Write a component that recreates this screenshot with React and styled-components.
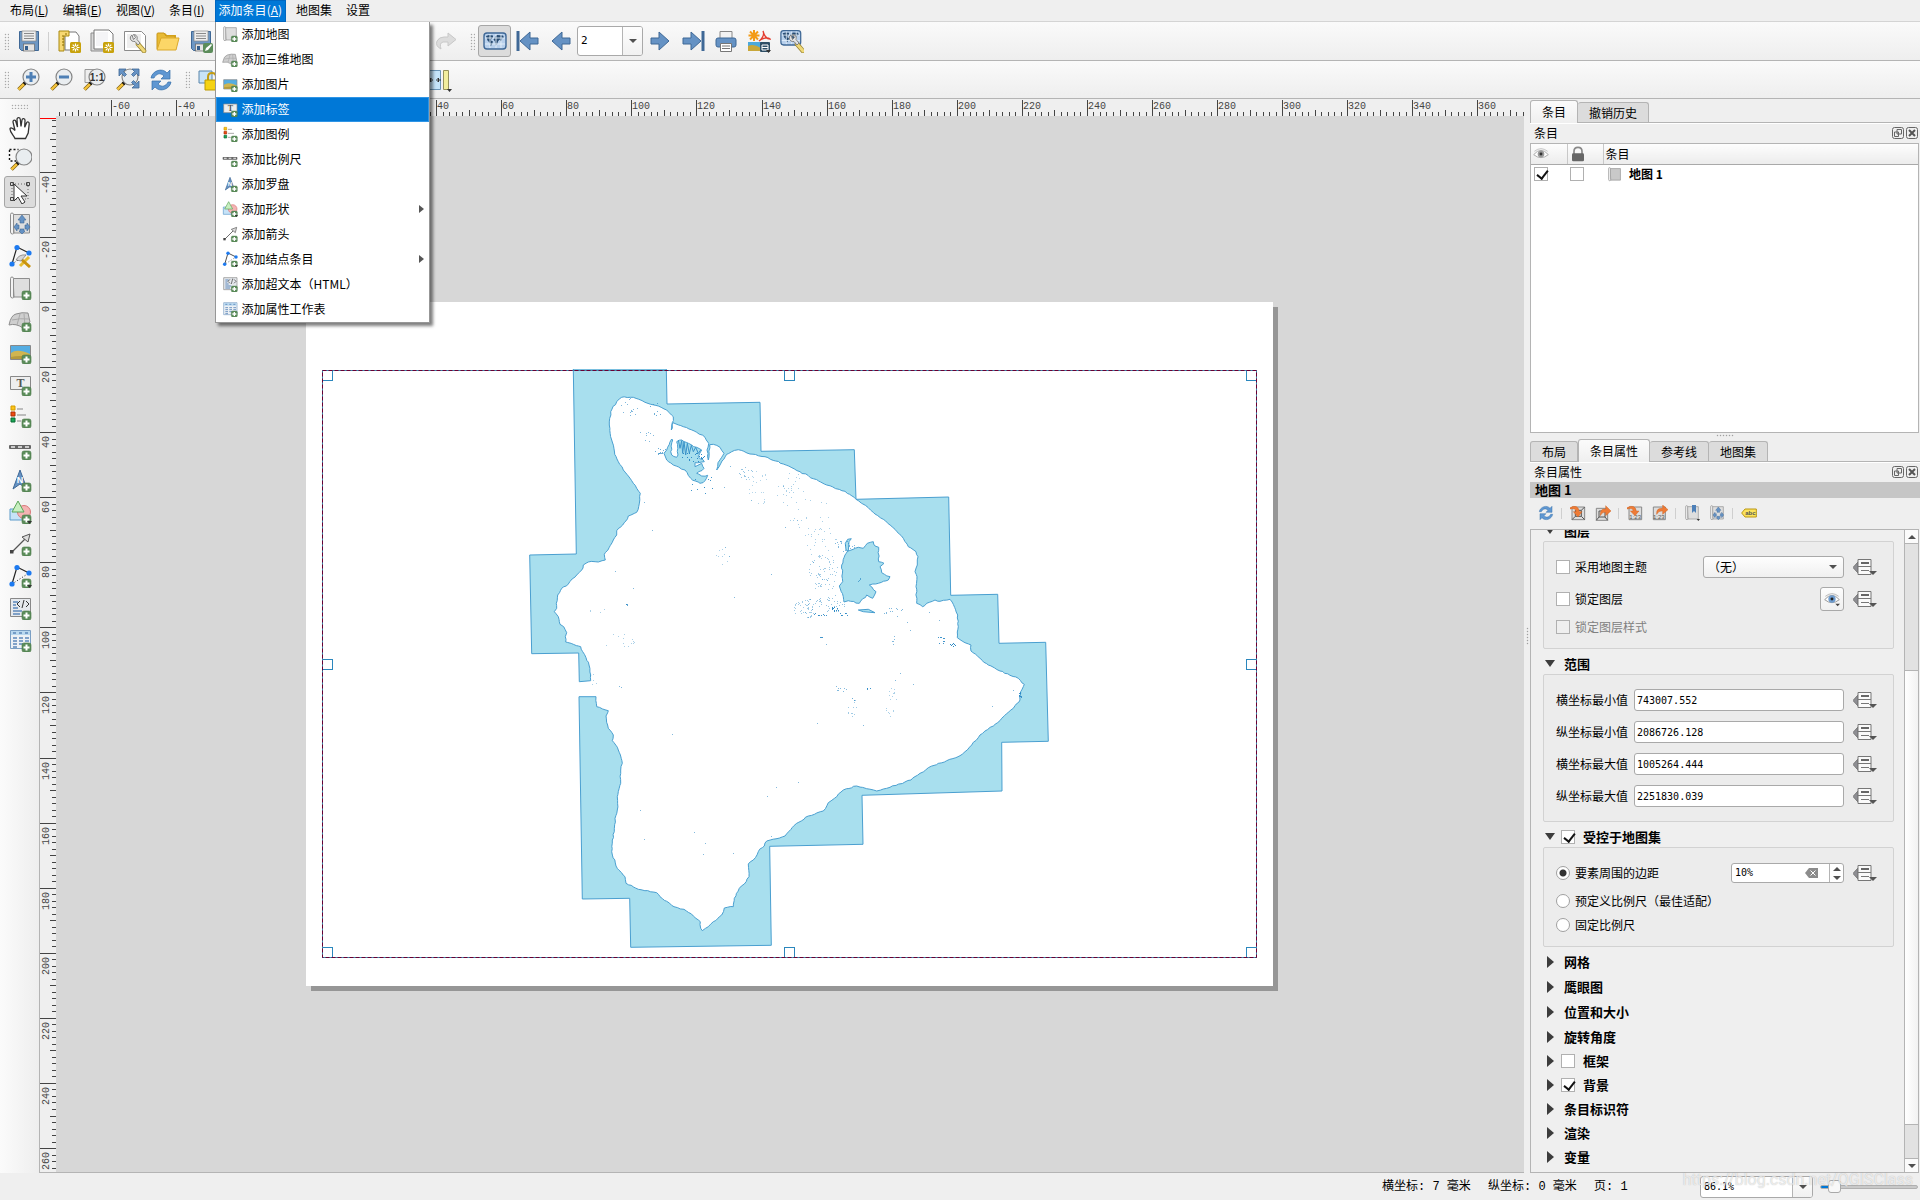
import { useState } from "react";
import styled, { createGlobalStyle, css } from "styled-components";

const GlobalStyle = createGlobalStyle`
    * {
        box-sizing: border-box;
    }
    html, body {
        margin: 0;
        overflow: hidden;
    }
    body, button, input, select, table {
        font-family: "Noto Sans CJK SC", sans-serif;
        font-size: 12px;
        line-height: 16px;
        color: #000;
    }
    button {
        border: none;
        background: none;
        padding: 0;
    }
    svg {
        display: block;
        flex: none;
    }
`;

const mono = `"DejaVu Sans Mono", "Noto Sans CJK SC", monospace`;

/* ---------- layout ---------- */

const Window = styled.div`
    display: flex;
    flex-direction: column;
    height: 100vh;
    background: #efefef;
`;
const MenuBar = styled.nav`
    display: flex;
    height: 22px;
    padding-left: 3px;
    border-bottom: 1px solid #d4d4d4;
`;
const MenuItem = styled.div`
    position: relative;
    display: flex;
`;
const MenuButton = styled.button`
    height: 22px;
    padding: 0 7px 2px;
    white-space: nowrap;
    ${(p) => p.$open && css`
        padding: 0 4px 2px;
        margin: 0 3px;
        color: white;
        background: #0078d7;
        box-shadow: inset 0 0 0 1px #0067c0;
    `}
`;
const Dropdown = styled.ul`
    position: absolute;
    z-index: 10;
    top: 22px;
    left: 3px;
    width: 215px;
    margin: 0;
    padding: 0;
    list-style: none;
    background: white;
    border: 1px solid #979797;
    border-top: none;
    box-shadow: 3px 3px 3px rgba(0, 0, 0, 0.5);
`;
const DropdownItem = styled.button`
    display: flex;
    align-items: center;
    gap: 4px;
    width: 100%;
    height: 25px;
    padding: 0 5px 1px 6px;
    text-align: left;
    white-space: nowrap;
    ${(p) => p.$active && css`
        color: white;
        background: #0078d7;
        box-shadow: inset 0 0 0 1px #2f95e6;
    `}
`;
const SubArrow = styled.span`
    margin-left: auto;
    border: 4px solid transparent;
    border-left: 5px solid #555;
    border-right: none;
`;
const ToolBar = styled.div`
    display: flex;
    align-items: center;
    height: ${(p) => p.$height}px;
    border-bottom: 1px solid #b4b4b4;
    background: linear-gradient(#fafafa, #eeeeee);
`;
const Grip = styled.span`
    flex: none;
    width: 5px;
    height: 17px;
    margin: 0 3px 0 ${(p) => p.$left || 4}px;
    background: radial-gradient(circle, #a8a8a8 30%, transparent 50%) 0 0 / 3px 3px;
`;
const ToolButton = styled.button`
    display: flex;
    align-items: center;
    justify-content: center;
    width: 33px;
    height: 32px;
    flex: none;
    border-radius: 3px;
    ${(p) => p.$pressed && css`
        background: #dcdcdc;
        border: 1px solid #a6a6a6;
    `}
`;
const Separator = styled.span`
    width: 1px;
    height: ${(p) => p.$height || 19}px;
    margin: 0 3px;
    background: #cfcfcf;
`;
const Spacer = styled.span`
    width: ${(p) => p.$width}px;
`;
const PageSelect = styled.div`
    display: flex;
    width: 66px;
    height: 30px;
    background: white;
    border: 1px solid #a9a9a9;
    border-radius: 3px;
    overflow: hidden;
`;
const PageInput = styled.input`
    flex: 1;
    min-width: 0;
    padding: 0 3px;
    border: none;
    outline: none;
    background: transparent;
    font-family: ${mono};
    font-size: ${(p) => p.$size || 11}px;
`;
const ComboButton = styled.button`
    display: flex;
    align-items: center;
    justify-content: center;
    width: 20px;
    border-left: 1px solid #b4b4b4;
    background: linear-gradient(#fdfdfd, #f1f1f1);
`;
const DownArrow = styled.span`
    border: 4px solid transparent;
    border-top: 4px solid #505050;
    border-bottom: none;
`;
const UpArrow = styled(DownArrow)`
    border-top: none;
    border-bottom: 4px solid #505050;
`;
const Main = styled.main`
    display: flex;
    flex: 1;
    min-height: 0;
`;
const SideTools = styled.aside`
    display: flex;
    flex-direction: column;
    align-items: center;
    width: 40px;
    flex: none;
    border-right: 1px solid #b4b4b4;
    background: linear-gradient(90deg, #fbfbfb, #eeeeee);
`;
const SideGrip = styled.span`
    width: 17px;
    height: 5px;
    margin: 5px 0 3px;
    background: radial-gradient(circle, #a8a8a8 30%, transparent 50%) 0 0 / 3px 3px;
`;
const SideButton = styled(ToolButton)`
    width: 32px;
`;
const Workspace = styled.section`
    display: grid;
    flex: 1;
    min-width: 0;
    grid-template: 17px minmax(0, 1fr) / 16px minmax(0, 1fr);
    border-bottom: 1px solid #b4b4b4;
`;
const Canvas = styled.div`
    position: relative;
    overflow: hidden;
    background: #d7d7d7;
`;
const Paper = styled.div`
    position: absolute;
    left: 250px;
    top: 186px;
    width: 967px;
    height: 684px;
    padding: 67px 16px 0 15px;
    background: white;
    box-shadow: 5px 5px 0 #969696;
`;
const Splitter = styled.div`
    display: flex;
    align-items: center;
    justify-content: center;
    width: 6px;
    flex: none;
    &::after {
        content: "";
        width: 3px;
        height: 18px;
        background: radial-gradient(circle, #a0a0a0 30%, transparent 50%) 0 0 / 3px 3px;
    }
`;
const Docks = styled.aside`
    display: flex;
    flex-direction: column;
    width: 390px;
    flex: none;
`;
const Dock = styled.section`
    display: flex;
    flex-direction: column;
    min-height: 0;
    flex: ${(p) => (p.$height ? `0 0 ${p.$height}px` : 1)};
`;
const Tabs = styled.div`
    display: flex;
    align-items: flex-end;
    height: 24px;
    border-bottom: 1px solid #b4b4b4;
    box-shadow: 0 1px 0 #fff;
`;
const Tab = styled.button`
    height: ${(p) => (p.$active ? 23 : 20)}px;
    padding: 0 11px;
    border: 1px solid #b4b4b4;
    border-left-width: ${(p) => (p.$active ? 1 : 0)}px;
    border-bottom: none;
    border-radius: 3px 3px 0 0;
    background: ${(p) => (p.$active ? "linear-gradient(#fbfbfb, #efefef)" : "#dcdcdc")};
    margin-bottom: ${(p) => (p.$active ? -1 : 0)}px;
    &:first-child {
        border-left-width: 1px;
    }
`;
const DockTitle = styled.div`
    display: flex;
    align-items: center;
    gap: 2px;
    height: 20px;
    padding: 0 2px 0 4px;
    flex: none;
    span {
        flex: 1;
    }
`;
const ItemsFrame = styled.div`
    flex: 1;
    margin-right: 1px;
    background: white;
    border: 1px solid #b4b4b4;
`;
const ItemsTable = styled.table`
    width: 100%;
    table-layout: fixed;
    border-collapse: collapse;
    th {
        height: 20px;
        padding: 0 2px;
        text-align: left;
        font-weight: 400;
        border-bottom: 1px solid #a9a9a9;
        background: linear-gradient(#fdfdfd, #ececec);
    }
    th + th {
        border-left: 1px solid #c8c8c8;
    }
    th:not(:last-child) {
        width: 36px;
    }
    td {
        height: 20px;
        padding: 0 3px;
    }
    td:last-child {
        padding-left: 4px;
    }
`;
const ItemName = styled.span`
    display: flex;
    align-items: center;
    gap: 7px;
    font-weight: 700;
`;
const HSplit = styled.div`
    height: 5px;
    flex: none;
    display: flex;
    justify-content: center;
    align-items: center;
    &::after {
        content: "";
        width: 18px;
        height: 3px;
        background: radial-gradient(circle, #a0a0a0 30%, transparent 50%) 0 0 / 3px 3px;
    }
`;
const ItemTitle = styled.h2`
    flex: none;
    height: 16px;
    margin: 0;
    padding-left: 5px;
    font-size: 13px;
    line-height: 16px;
    background: #c6c6c6;
`;
const ItemTools = styled.div`
    display: flex;
    align-items: center;
    height: 31px;
    padding: 0 0 1px 3px;
    flex: none;
`;
const ToolGroup = styled.div`
    display: flex;
    align-items: center;
`;
const SmallButton = styled.button`
    display: flex;
    align-items: center;
    justify-content: center;
    width: ${(p) => p.$width || 25}px;
    height: 24px;
    ${(p) => p.$framed && css`
        border: 1px solid #a9a9a9;
        border-radius: 3px;
        background: linear-gradient(#fdfdfd, #f0f0f0);
    `}
`;
const ScrollFrame = styled.div`
    display: flex;
    flex: 1;
    min-height: 0;
    margin-right: 1px;
    border: 1px solid #b4b4b4;
    border-right: none;
`;
const ScrollBody = styled.div`
    flex: 1;
    overflow: hidden;
`;
const ScrollBar = styled.div`
    display: flex;
    flex-direction: column;
    width: 15px;
    border: 1px solid #b4b4b4;
    border-width: 0 1px;
    background: #e2e2e2;
`;
const ScrollStep = styled.button`
    display: flex;
    align-items: center;
    justify-content: center;
    height: 14px;
    background: #fbfbfb;
    border: 0 solid #b4b4b4;
    border-width: ${(p) => (p.$end ? "1px 0 0" : "0 0 1px")};
`;
const ScrollTrack = styled.div`
    flex: ${(p) => p.$share};
`;
const ScrollThumb = styled(ScrollTrack)`
    border: solid #b4b4b4;
    border-width: 1px 0;
    background: linear-gradient(90deg, #fff, #f2f2f2);
`;
const SectionHead = styled.div`
    display: flex;
    align-items: center;
    height: ${(p) => p.$height || 25}px;
    padding: ${(p) => (p.$open ? 4 : 0)}px 0 0 13px;
    font-size: 13px;
    font-weight: 700;
    label {
        margin-left: 8px;
        font-size: 13px;
    }
    input {
        margin-left: 5px;
    }
`;
const Toggle = styled.button`
    width: 12px;
    height: 12px;
    display: flex;
    align-items: center;
    justify-content: center;
    &::before {
        content: "";
        border: solid transparent;
        ${(p) => p.$open
            ? "border-width: 7px 5px 0; border-top-color: #3c3c3c;"
            : "border-width: 6px 0 6px 7px; border-left-color: #3c3c3c;"}
    }
`;
const Group = styled.div`
    margin: 0 10px 0 12px;
    padding: 9px 16px 9px 12px;
    border: 1px solid #d2d2d2;
    border-radius: 2px;
    background: #ececec;
`;
const FirstSection = styled.div`
    margin-top: -14px;
`;
const Collapsed = styled.div`
    margin-top: 2px;
`;
const Row = styled.div`
    display: flex;
    align-items: center;
    gap: 9px;
    height: ${(p) => p.$height || 32}px;
`;
const Choice = styled.label`
    display: flex;
    align-items: center;
    gap: 5px;
    flex: 1;
    color: ${(p) => (p.$disabled ? "#808080" : "#000")};
`;
const FieldLabel = styled.label`
    width: 69px;
    white-space: nowrap;
`;
const Field = styled.input`
    flex: 1;
    min-width: 0;
    height: 22px;
    padding: 0 2px;
    border: 1px solid #a9a9a9;
    border-radius: 3px;
    background: white;
    font-family: ${mono};
    font-size: 10px;
`;
const Check = styled.input.attrs({ type: "checkbox" })`
    appearance: none;
    display: block;
    flex: none;
    width: 14px;
    height: 14px;
    margin: 0;
    border: 1px solid #b0b0b0;
    background: white;
    &:checked::after {
        content: "";
        display: block;
        width: 5px;
        height: 9px;
        margin: 0 0 0 4px;
        border: solid #111;
        border-width: 0 2px 2px 0;
        transform: rotate(38deg);
    }
    &:disabled {
        background: #efefef;
    }
`;
const Radio = styled.input.attrs({ type: "radio" })`
    appearance: none;
    flex: none;
    width: 14px;
    height: 14px;
    margin: 0;
    border: 1px solid #a0a0a0;
    border-radius: 50%;
    background: white;
    &:checked {
        background: radial-gradient(circle, #333 0 3px, white 4px);
    }
`;
const SelectBox = styled.div`
    position: relative;
    width: 141px;
    select {
        appearance: none;
        width: 100%;
        height: 22px;
        padding: 0 4px;
        border: 1px solid #a9a9a9;
        border-radius: 3px;
        background: linear-gradient(#fefefe, #f0f0f0);
    }
    span {
        position: absolute;
        right: 7px;
        top: 9px;
        pointer-events: none;
    }
`;
const SpinBox = styled.div`
    display: flex;
    align-items: center;
    width: 113px;
    height: 20px;
    border: 1px solid #a9a9a9;
    border-radius: 3px;
    background: white;
    svg {
        margin-right: 11px;
    }
`;
const SpinSteps = styled.div`
    display: flex;
    flex-direction: column;
    align-self: stretch;
    width: 14px;
    border-left: 1px solid #b4b4b4;
    button {
        flex: 1;
        display: flex;
        align-items: center;
        justify-content: center;
    }
`;
const StatusBar = styled.footer`
    position: relative;
    display: flex;
    align-items: center;
    justify-content: flex-end;
    height: 27px;
    padding-right: 2px;
`;
const StatusText = styled.span`
    width: 106px;
    white-space: pre;
    font-family: "Liberation Mono", "Noto Sans CJK SC", monospace;
`;
const ZoomBox = styled(PageSelect)`
    width: 113px;
    height: 22px;
`;
const ZoomSlider = styled.input.attrs({ type: "range" })`
    appearance: none;
    width: 98px;
    height: 14px;
    margin: 0 0 0 7px;
    background: transparent;
    &::-webkit-slider-runnable-track {
        height: 4px;
        border: 1px solid #b0b0b0;
        border-radius: 2px;
        background: linear-gradient(90deg, #0078d7 12%, #c9c9c9 12%);
    }
    &::-webkit-slider-thumb {
        appearance: none;
        width: 13px;
        height: 13px;
        margin-top: -6px;
        border: 1px solid #a9a9a9;
        border-radius: 3px;
        background: #f8f8f8;
    }
`;
const Watermark = styled.span`
    position: absolute;
    right: 7px;
    top: -3px;
    font-family: Roboto, sans-serif;
    font-size: 16px;
    line-height: 20px;
    color: rgba(255, 255, 255, 0.7);
    text-shadow: 0 0 1px rgba(120, 120, 120, 0.55);
    pointer-events: none;
`;

/* ---------- icons, all on a 24 grid ---------- */

const Icon = ({ size = 24, children }) => (
    <svg width={size} height={size} viewBox="0 0 24 24" fill="none" aria-hidden="true">{children}</svg>
);
const Plus = () => (
    <g>
        <rect x="14" y="15" width="9" height="9" rx="2" fill="#5b8c5a" stroke="#497a48" strokeWidth=".6" />
        <path d="M18.5 16.5v6M15.5 19.5h6" stroke="#fff" strokeWidth="2" />
    </g>
);
const Star = () => (
    <g>
        <rect x="13" y="13" width="11" height="11" rx="1.5" fill="#c8a20c" />
        <path d="M18.5 14.5v8M14.5 18.5h8M15.7 15.7l5.6 5.6M21.3 15.7l-5.6 5.6" stroke="#fff" strokeWidth="1.2" />
        <circle cx="18.5" cy="18.5" r="1.3" fill="#c8a20c" />
    </g>
);
const Wrench = ({ x = 0, y = 0 }) => (
    <g transform={`translate(${x} ${y})`}>
        <path d="M15 15l6 7" stroke="#9a8430" strokeWidth="4.6" strokeLinecap="round" />
        <path d="M15 15l6 7" stroke="#efd878" strokeWidth="3" strokeLinecap="round" />
        <path d="M9 6c-3 2-2 7 3 6.500l3 3.500 2-2-3-3.500c1-3-1-5-3.500-5l2 3-2 2z" fill="#e3e3e3" stroke="#777" strokeWidth=".9" />
    </g>
);
const Lens = ({ children, dx = -1 }) => (
    <g transform={`translate(${dx} 0)`}>
        <path d="M9 15l-6.500 6.500" stroke="#7a5c10" strokeWidth="3.600" />
        <path d="M8 16l-5.500 5.500" stroke="#f5c33b" strokeWidth="2.400" />
        <path d="M10 14l-2 2" stroke="#111" strokeWidth="3.400" />
        <circle cx="15" cy="9" r="8" fill="#e9edf0" stroke="#858585" strokeWidth="1.200" />
        {children}
    </g>
);
const Sheet = ({ fill = "#dedede" }) => (
    <g stroke="#8e8e8e">
        <path d="M5 2.500h16.500v18.500H6z" fill={fill} />
        <path d="M2.500 2.500q0-1.500 1.500-1.500t1.500 1.500v17.500q1 2-1 2t-2-2z" fill="#f3f3f3" />
    </g>
);
const Floppy = () => (
    <g>
        <path d="M2.500 2.500h19v19h-17l-2-2z" fill="#6d97c4" stroke="#3f6896" />
        <rect x="5" y="2" width="14" height="10" fill="#eee" stroke="#888" strokeWidth=".7" />
        <path d="M7 4.500h10M7 7h10M7 9.500h10" stroke="#8a8a8a" />
        <rect x="6.500" y="15" width="11" height="7" fill="#e4e4e4" stroke="#666" strokeWidth=".7" />
        <rect x="8" y="17" width="3" height="4" fill="#365f8d" />
    </g>
);
const Globe = () => (
    <g>
        <rect x="1" y="4" width="22" height="16" rx="3" fill="#b8d0ec" stroke="#3f6896" strokeWidth="1.400" />
        <path d="M3 7l3-1 4 .5 0 2-2 2 0 1 2 1-1 3-1.500 2-1-4-2-2zM12 8l2-2 6 .5 1 2-2 1-1 3-1.500-2-1.500 2-1 3-1.500 1-.5-4-1.500-2z" fill="#294d73" />
        <path d="M2 9h20M2 15h20M7 5v14M13 5v14M18 5v14" stroke="#e5f0fb" strokeWidth=".9" />
    </g>
);
const Nodes = () => (
    <g>
        <path d="M4 20L9 3l12 6" stroke="#222" strokeWidth="1.200" />
        <path d="M4 20L21 9" stroke="#222" strokeDasharray="1 2" />
        <circle cx="9" cy="3.500" r="2.600" fill="#1d7af0" />
        <circle cx="21" cy="9" r="2.600" fill="#1d7af0" />
        <circle cx="4" cy="20" r="2.600" fill="#1d7af0" />
    </g>
);
const Caret = () => <path d="M19 21h5l-2.500 3z" fill="#333" />;

const ARROW_RIGHT = "M4 9h8V3l10 9-10 9v-6H4z";
const blue = { fill: "#6592c4", stroke: "#3f6896" };

const drawings = {
    save: <Floppy />,
    newLayout: <><path d="M8 3h11l3 4v14H8z" fill="#fff" stroke="#777" /><path d="M2 2h10v5H7v15H2z" fill="#f7d873" stroke="#a98910" /><path d="M5 7h2M5 10h2M5 13h2M5 16h2M9 4v2" stroke="#8a6c00" /><Star /></>,
    duplicate: <><path d="M1 4h17v18H1z" fill="#d8d8d8" stroke="#8b8b8b" /><path d="M4 1h15l4 4v15H4z" fill="#fff" stroke="#777" /><path d="M6 3h12v14H6z" fill="#f4f4f6" /><Star /></>,
    manager: <><path d="M1.500 2.500h17l4 4v15h-21z" fill="#fff" stroke="#8b8b8b" /><path d="M4 5h14v14H4z" fill="#eee" /><Wrench /></>,
    folder: <><path d="M2 4h7l2 2h9v3H2z" fill="#d9a91c" /><path d="M1 20V5q0-1 1-1h6l2 3h9v3" fill="#e8bb35" stroke="#c9971a" /><path d="M5 9h18l-3 12H1z" fill="#fcd667" stroke="#dba92c" /></>,
    saveAs: <><Floppy /><rect x="14" y="14" width="10" height="10" rx="2" fill="#5b8c5a" /><path d="M16 22l1-3 5-4 1 1-4 5z" fill="#fff" /></>,
    redo: <path d="M14 4l8 6.500-8 6.500v-4H9q-4 1-2 7-6-3-4-8 2-4 7-4h4z" fill="#dcdcdc" stroke="#c8c8c8" />,
    atlas: <Globe />,
    first: <><path d="M2 2v20" stroke="#3f6896" strokeWidth="3" /><path d={ARROW_RIGHT} transform="translate(26 0) scale(-1 1)" {...blue} /></>,
    prev: <path d={ARROW_RIGHT} transform="translate(25 0) scale(-1 1)" {...blue} />,
    next: <path d={ARROW_RIGHT} transform="translate(-1 0)" {...blue} />,
    last: <><path d="M22 2v20" stroke="#3f6896" strokeWidth="3" /><path d={ARROW_RIGHT} transform="translate(-2 0)" {...blue} /></>,
    print: <><path d="M6 2.500h12v7H6z" fill="#f3f3f3" stroke="#888" /><rect x="2" y="9" width="20" height="9" rx="2" {...blue} /><path d="M6.500 14.500h11v8h-11z" fill="#fff" stroke="#777" /><path d="M8 17h8M8 19.500h8" stroke="#777" /></>,
    exportAtlas: <><path d="M7 1v11M1.500 6.500h11M3 2.500l8 8M11 2.500l-8 8" stroke="#f39b17" strokeWidth="2" /><path d="M16 2c2 4-2 9-4 10 3-3 9-4 11-2-4 0-6-4-7-8" stroke="#e33b2e" strokeWidth="1.300" /><path d="M1 13h13v9H1z" fill="#4ba9dd" /><path d="M1 17q5-3 13 2v3H1z" fill="#c8a73a" /><rect x="13" y="13" width="10" height="10" rx="1" fill="#2f4f66" /><path d="M15 16h6v5h-6zM15 18.500h6" stroke="#fff" /><Caret /></>,
    atlasSettings: <><g transform="translate(0 -2) scale(.9)"><Globe /></g><Wrench x={2} /></>,
    zoomIn: <Lens><path d="M15 4v10M10 9h10" stroke="#4d7fb5" strokeWidth="3" /></Lens>,
    zoomOut: <Lens><path d="M10 9h10" stroke="#4d7fb5" strokeWidth="3" /></Lens>,
    zoomActual: <><path d="M2 1.500h10v13H2z" stroke="#999" fill="#eee" /><Lens><text x="15" y="13" textAnchor="middle" fontSize="10" fontWeight="700" fontFamily="Liberation Sans, sans-serif" fill="#333">1:1</text></Lens></>,
    zoomFull: <><Lens /><path d="M3 1h7l-2.500 2.500 3 3-2 2-3-3L3 8zM23 1h-7l2.500 2.500-3 3 2 2 3-3L23 8zM23 20h-7l2.500-2.500-3-3 2-2 3 3L23 13z" {...blue} strokeWidth=".8" /></>,
    refresh: <><path d="M2 10C3 3 13-1 18 5l3-3v9h-9l3-3C11 4 7 6 5 10z" fill="#5f97d2" stroke="#3670a9" strokeWidth=".7" /><path d="M22 14c-1 7-11 11-16 5l-3 3v-9h9l-3 3c4 4 8 2 10-2z" fill="#5f97d2" stroke="#3670a9" strokeWidth=".7" /></>,
    lockItems: <><path d="M1 3h13v12H1z" fill="#c8e3f7" stroke="#5b86ab" /><path d="M10 13V9q0-4 4-4t4 4v4" stroke="#c39c13" strokeWidth="2" /><path d="M7 12h14v10H7z" fill="#f5d313" stroke="#bd9a00" /></>,
    resize: <><path d="M1.500 2.500h11v19h-11z" fill="#c5e4fa" stroke="#6b95b7" /><path d="M0 12h3M4.500 12l-2-2v4zM13 12h-3M8.500 12l2-2v4z" stroke="#333" /><path d="M15.500 2.500h5v19h-5z" fill="#f2ee9d" stroke="#96925b" /><Caret /></>,
    pan: <path d="M7 22.500c-1-3-5-6-5-9.500 0-2 3-1 5 1.500L5 6c0-2.500 2.500-2.500 3 0l1.500 5L9 3.500c0-2.500 3-2.500 3.300 0l.7 7 1-6.500c.3-2 3-1.700 3 .3l-.3 7L18.500 7c.8-2 3-1 2.700 1l-1 9-2.700 5.500z" fill="#fff" stroke="#333" strokeWidth="1.300" />,
    zoomArea: <><path d="M1.500 2v11h10M1.500 1.500h9" stroke="#111" strokeWidth="1.400" strokeDasharray="2 2" /><Lens dx={1} /></>,
    select: <><path d="M4 4h16v15H4z" stroke="#666" strokeDasharray="1 2" /><path d="M2.500 2.500h3v3h-3zM18.500 2.500h3v3h-3zM2.500 17.500h3v3h-3z" stroke="#444" /><path d="M6 4v17l4-4 4 7 3-2-4-6h6z" fill="#fff" stroke="#333" /></>,
    moveContent: <><Sheet /><path d="M14 3l4 5h-2v3h-4V8h-2zM14 22l-3-3h1v-2h4v2h1zM6 15l3-4v2h2v4H9v2zM22 15l-3-4v2h-2v4h2v2z" {...blue} strokeWidth=".6" /></>,
    editNodes: <><Nodes /><path d="M12 22l9-9" stroke="#e5bd32" strokeWidth="3" /><path d="M13 15l9 8" stroke="#c9920d" strokeWidth="3" /><path d="M8 16q3-6 10-5l-5 6z" fill="#d5d5d5" stroke="#777" strokeWidth=".7" /></>,
    addMap: <><Sheet /><Plus /></>,
    add3d: <><path d="M1 17q2-10 7-11 6-2 12-1l2 9-7 6q-7-5-14-3z" fill="#cfcfcf" stroke="#8e8e8e" /><path d="M4 12q8-2 17-1M12 6l-3 11M16 6l1 12" stroke="#aaa" /><Plus /></>,
    addPicture: <><path d="M2.500 5.500h20v14h-20z" fill="#55ade2" stroke="#888" /><path d="M3 13q6-5 19 1v5H3z" fill="#d0b550" /><path d="M3 17q8-2 19 0v2H3z" fill="#b59a3c" /><Plus /></>,
    addLabel: <><path d="M2.500 4.500h20v13h-20z" fill="#eee" stroke="#888" /><text x="12.500" y="15" textAnchor="middle" fontSize="12" fontWeight="700" fontFamily="Liberation Serif, serif" fill="#555">T</text><Plus /></>,
    addLegend: <><path d="M3 2h4v4H3z" fill="#fcc419" stroke="#d39b00" /><path d="M3 8h4v4H3z" fill="#f04a12" stroke="#a93309" /><path d="M3 14h4v4H3z" fill="#19a657" stroke="#0a6a33" /><path d="M9 5h6M9 11h9M9 17h4" stroke="#aaa" strokeWidth="1.500" /><Plus /></>,
    addScale: <><rect x="1" y="9" width="22" height="4" rx="1" fill="#666" /><path d="M3 11h4M10 11h4M17 11h4" stroke="#eee" strokeWidth="1.600" /><Plus /></>,
    addNorth: <><path d="M12 2l7 19-7-5-7 5z" {...blue} /><text x="12" y="15" textAnchor="middle" fontSize="9" fontWeight="700" fontFamily="Liberation Sans, sans-serif" fill="#fff">N</text><Plus /></>,
    addShape: <><path d="M2 9h13v11H2z" fill="#c7e3f8" stroke="#5d9ccb" /><circle cx="16" cy="12" r="6.500" fill="#f4b3b3" stroke="#d87878" /><path d="M10 1l6 11H4z" fill="#c8efc0" stroke="#5aa558" /><Plus /><Caret /></>,
    addArrow: <><path d="M4 20L18 6" stroke="#555" strokeWidth="1.300" /><path d="M22 2l-2 8-6-5z" fill="#ddd" stroke="#555" /><path d="M2 18h3.500v3.500H2z" fill="#444" /><Plus /></>,
    addNodes: <><Nodes /><Plus /><Caret /></>,
    addHtml: <><path d="M2.500 2.500h20v18h-20z" fill="#e6e9ed" stroke="#888" /><path d="M5 6h5M5 9h3M5 12h5M5 15h9M5 18h7" stroke="#5d88ba" strokeWidth="1.500" /><path d="M12 5l-3 3 3 3M18 5l3 3-3 3M16 4l-2 8" stroke="#333" /><Plus /></>,
    addTable: <><path d="M2.500 2.500h20v18h-20z" fill="#edf1f5" stroke="#7a9fc4" /><path d="M3 3h19v4H3z" fill="#b9d8ef" /><path d="M5 5h3M11 5h3M17 5h3M5 10h4M11 10h4M17 10h4M5 13h4M11 13h4M17 13h4M5 16h4M11 16h4M5 19h4" stroke="#5d88ba" strokeWidth="1.300" /><Plus /></>,
    setExtent: <><path d="M3 3h19v19H3z" fill="#ddd" stroke="#888" strokeWidth="1.500" /><path d="M8 8h9v9H8zM3 22l5-5M22 22l-5-5M22 3l-5 5" stroke="#555" strokeWidth="1.500" /><path d="M0 4q12-6 14 6h4l-6 8-7-8h4q0-6-9-4z" fill="#ee7b36" stroke="#c95a17" strokeWidth=".6" /></>,
    viewExtent: <><path d="M2 5h17v18H2z" fill="#ddd" stroke="#888" strokeWidth="1.500" /><path d="M6 9h9v9H6zM2 23l4-5M19 23l-4-5" stroke="#555" strokeWidth="1.500" /><path d="M8 16Q7 5 16 6V1l8 8-8 7v-5q-5-1-8 5z" fill="#ee7b36" stroke="#c95a17" strokeWidth=".6" /></>,
    setScale: <><path d="M3 3h19v19H3z" fill="#ddd" stroke="#888" strokeWidth="1.500" /><text x="21" y="21" textAnchor="end" fontSize="9" fontFamily="Liberation Sans, sans-serif" fill="#555">1:23</text><path d="M0 4q12-6 14 5h4l-6 7-7-7h4q0-5-9-3z" fill="#ee7b36" stroke="#c95a17" strokeWidth=".6" /></>,
    viewScale: <><path d="M2 3h18v19H2z" fill="#ddd" stroke="#888" strokeWidth="1.500" /><text x="19" y="21" textAnchor="end" fontSize="9" fontFamily="Liberation Sans, sans-serif" fill="#555">1:23</text><path d="M7 14Q6 4 16 5V0l8 7-8 7v-5q-6-1-9 5z" fill="#ee7b36" stroke="#c95a17" strokeWidth=".6" /></>,
    bookmark: <><Sheet /><path d="M12 0h6v12l-3-3-3 3z" fill="#4d80b8" /><Caret /></>,
    labels: <><path d="M1 12l5-6h17v12H6z" fill="#fbe35c" stroke="#bb9713" strokeWidth="1.500" /><text x="14" y="15.500" textAnchor="middle" fontSize="9" fontWeight="700" fontFamily="Liberation Sans, sans-serif" fill="#555">abc</text></>,
    mapItem: <Sheet fill="#c9c9c9" />,
    eye: <><path d="M1 13q11-13 22 0-11 9-22 0z" fill="#fff" stroke="#999" strokeWidth="1.500" /><circle cx="12" cy="12" r="5.500" fill="#6e9ccf" /><circle cx="12" cy="12" r="2.200" fill="#222" /><path d="M2 8q10-8 20 0" stroke="#999" /><path d="M17 19h7l-3.500 4z" fill="#444" /></>,
    eyeGray: <><path d="M1 13q11-13 22 0-11 9-22 0z" fill="#fff" stroke="#aaa" strokeWidth="1.500" /><circle cx="12" cy="12" r="5" fill="#999" /><circle cx="12" cy="12" r="2.200" fill="#333" /><path d="M2 8q10-8 20 0" stroke="#aaa" /></>,
    padlock: <><path d="M6 12V8q0-6 6-6t6 6v4" stroke="#888" strokeWidth="2.500" /><rect x="3" y="11" width="18" height="12" rx="2" fill="#666" /></>,
};

const Draw = ({ name, size }) => <Icon size={size}>{drawings[name]}</Icon>;

const OverrideIcon = () => (
    <svg width="24" height="18" viewBox="0 0 24 18" fill="none" aria-hidden="true">
        <path d="M5 4v11L0 9.500z" fill="#8e8e93" stroke="#777" />
        <path d="M5 1.500h13v15H5z" fill="#fafafa" stroke="#777" />
        <path d="M8 5h8" stroke="#666" strokeWidth="2" />
        <path d="M5 8.500h13M8 12.500h8" stroke="#777" />
        <path d="M16 13h8l-4 4z" fill="#555" />
    </svg>
);
const DockIcon = ({ close }) => (
    <svg width="12" height="12" viewBox="0 0 12 12" fill="none" aria-hidden="true">
        <rect x=".5" y=".5" width="11" height="11" rx="2" stroke="#666" />
        {close
            ? <path d="M3 3l6 6M9 3L3 9" stroke="#555" strokeWidth="2" />
            : <path d="M5 2.500h4.500V7H5zM2.500 5h4v4.500h-4z" stroke="#666" />}
    </svg>
);

/* ---------- rulers ---------- */

const PX_PER_MM = 3.254;
const ticksBetween = (from, to) => Array.from({ length: (to - from) / 2 + 1 }, (_, i) => from + i * 2);
const tickLength = (mm) => (mm % 20 === 0 ? 16 : mm % 10 === 0 ? 6 : 4);

const RulerSvg = styled.svg`
    width: 100%;
    height: 100%;
    overflow: hidden;
    background: #efefef;
    font-family: "Liberation Mono", monospace;
    font-size: 10px;
    fill: #444;
    shape-rendering: crispEdges;
`;

const HorizontalRuler = () => (
    <RulerSvg>
        {ticksBetween(-76, 374).map((mm) => {
            const x = Math.round(250 + mm * PX_PER_MM);
            return (
                <g key={mm}>
                    <rect x={x} y={17 - tickLength(mm)} width="1" height={tickLength(mm)} />
                    {mm % 20 === 0 && <text x={x + 1} y="10">{mm}</text>}
                </g>
            );
        })}
    </RulerSvg>
);
const VerticalRuler = () => (
    <RulerSvg>
        {ticksBetween(-56, 266).map((mm) => {
            const y = Math.round(186 + mm * PX_PER_MM);
            return (
                <g key={mm}>
                    <rect x={16 - tickLength(mm)} y={y} width={tickLength(mm)} height="1" />
                    {mm % 20 === 0 && (
                        <text transform={`translate(9 ${y + 4}) rotate(-90)`} textAnchor="end">{mm}</text>
                    )}
                </g>
            );
        })}
        <rect x="0" y="2" width="16" height="1" fill="#f00" />
    </RulerSvg>
);

/* ---------- map ---------- */

// survey sheets: each has its own origin, three sheet units per pixel
const sheets = { nw: [520, 360], ne: [780, 440], s: [560, 680] };

const place = (sheet, text) => {
    const [ox, oy] = sheets[sheet];
    return text.trim().split(/\s+/).map((pair) => {
        const [u, v] = pair.split(",").map(Number);
        return [ox + u / 3, oy + v / 3];
    });
};
const toPath = (points) => "M" + points.map(([x, y]) => `${x.toFixed(1)} ${y.toFixed(1)}`).join("L") + "Z";

let seed = 7;
const random = () => {
    seed = (seed * 16807) % 2147483647;
    return seed / 2147483647;
};
// splits long coast segments so the shore line looks ragged
const ragged = (points) => points.flatMap(([x, y], i) => {
    const next = points[i + 1];
    if (!next) return [[x, y]];
    const steps = Math.max(1, Math.round(Math.hypot(next[0] - x, next[1] - y) / 3));
    return Array.from({ length: steps }, (_, k) => {
        const t = k / steps;
        const jitter = k === 0 ? 0 : 1.2;
        return [
            x + (next[0] - x) * t + (random() - 0.5) * jitter,
            y + (next[1] - y) * t + (random() - 0.5) * jitter,
        ];
    });
});

const coast = [
    ...place("nw", `212,962 212,945 207,915 198,893 188,875 182,860 160,853 137,846 136,830 140,818 131,800 120,793
        115,770 103,755 110,745 109,730 113,705 125,685 145,672 170,645 185,630 190,615 205,606 235,606 256,600 253,583
        268,562 280,540 290,525 290,512 308,495 325,468 350,457 356,440 361,400 350,385 335,362 310,330 295,305 284,283
        275,240 268,195 272,155 290,125 305,112 340,112 375,127 415,138 440,150 460,170 454,210 459,188 490,200 530,217
        555,232 566,250 561,270 565,300 569,254 580,253 600,262 612,280 594,308 590,330 606,303 620,283 635,275 655,269
        690,282 735,290 790,312`),
    ...place("ne", `60,95 100,116 140,135 195,154 228,178 265,203 285,222 310,238 345,268 370,295 385,320 408,335
        414,350 412,375 405,395 411,410 408,440 410,490 428,500 440,490 465,480 480,484 510,478 520,493 533,525 535,560
        532,593 555,608 573,615 573,633 600,655 625,675 660,693 690,706 715,715 733,733 722,755 720,780 700,805 665,835
        640,858 600,885 575,915 555,935 540,947 500,962 445,983 420,1000 393,1020`),
    ...place("s", `990,322 970,327 950,333 920,326 890,318 850,330 830,350 805,368 790,393 745,408 710,430 675,468
        620,483 613,498 595,515 580,540 565,552 567,590 553,612 538,625 523,655 520,680 493,684 485,705 460,725 445,740
        427,752 422,745 421,725 400,708 372,688 342,680 300,650 290,638 235,628 198,610 195,590 168,558 155,515 157,480
        163,455 165,415 172,390 172,350 182,310 182,270 187,250 175,210 157,182 160,165 145,145 138,108 145,92 110,80
        108,50`),
];
const border = [
    ...place("s", "57,50 67,657 209,655 212,802 634,796 629,499 909,493 906,346"),
    [1002, 791],
    ...place("ne", "665,907 805,904 797,607 657,610 653,463 512,466 506,171 228,178 223,29"),
    ...place("nw", "723,274 720,127 441,132 439,27 160,27 169,582 29,585 35,881 176,879 178,965"),
];
const shapes = [
    [...ragged(coast), ...border],
    ragged(place("ne", `192,486 190,470 178,438 188,425 185,375 195,345 203,333 235,322 250,325 262,310 280,305 285,318
        296,322 296,365 312,370 300,380 305,398 330,410 325,420 295,430 268,435 288,455 278,475 260,465 238,490 205,482`)),
    place("ne", "198,330 196,310 203,298 214,296 207,305 205,333"),
    place("ne", "235,510 265,508 285,518 250,515"),
    ragged(place("nw", `432,280 440,270 455,237 458,240 452,275 455,285 470,292 474,285 470,245 485,240 515,255 545,270
        535,290 553,305 525,308 525,320 545,310 552,325 530,340 545,348 563,346 555,362 540,370 512,355 495,330 460,315
        440,300`)),
];
const gulches = place("nw", "475,240 480,265 485,242 488,280 492,245 497,285 502,250 508,280 514,256 520,275 527,262 535,280 542,270");

// [sheet, centre x, centre y, radius x, radius y, dots, opacity]
const clusters = [
    ["nw", 330, 140, 30, 30, 14, 0.6],
    ["nw", 405, 150, 20, 25, 8, 0.7],
    ["nw", 370, 230, 30, 20, 8, 0.6],
    ["nw", 420, 272, 15, 14, 14, 0.7],
    ["nw", 515, 290, 40, 14, 22, 1],
    ["nw", 555, 375, 55, 30, 11, 0.9],
    ["nw", 680, 340, 22, 20, 16, 0.5],
    ["nw", 715, 385, 35, 55, 26, 0.35],
    ["nw", 795, 400, 28, 35, 16, 0.4],
    ["nw", 605, 590, 25, 28, 10, 0.4],
    ["nw", 290, 845, 55, 25, 13, 0.4],
    ["nw", 320, 735, 4, 5, 4, 0.8],
    ["nw", 225, 750, 45, 12, 4, 0.4],
    ["nw", 220, 950, 12, 30, 5, 0.4],
    ["ne", 40, 130, 35, 40, 12, 0.4],
    ["ne", 90, 230, 70, 60, 22, 0.4],
    ["ne", 130, 310, 55, 50, 32, 0.4],
    ["ne", 130, 400, 45, 60, 64, 0.45],
    ["ne", 75, 505, 35, 32, 55, 0.45],
    ["ne", 150, 490, 50, 28, 36, 0.5],
    ["ne", 165, 505, 10, 8, 12, 1],
    ["ne", 190, 315, 35, 20, 18, 0.6],
    ["ne", 120, 522, 25, 4, 9, 0.9],
    ["ne", 190, 522, 25, 5, 8, 0.9],
    ["ne", 340, 515, 28, 15, 12, 0.6],
    ["ne", 480, 600, 15, 12, 9, 0.9],
    ["ne", 517, 614, 9, 4, 8, 1],
    ["ne", 345, 600, 15, 14, 5, 0.6],
    ["ne", 215, 800, 15, 32, 16, 0.45],
    ["ne", 332, 780, 18, 50, 17, 0.4],
    ["ne", 180, 745, 24, 10, 8, 0.6],
    ["ne", 265, 745, 8, 4, 4, 0.9],
    ["ne", 720, 765, 4, 14, 12, 0.9],
    ["ne", 125, 592, 4, 3, 3, 0.9],
    ["ne", 240, 430, 12, 22, 4, 0.7],
];
const strays = [
    ...place("nw", "373,427 397,509 614,562 753,643 643,712 338,683 284,633 302,980 796,500 830,480 629,317 612,380"),
    ...place("ne", "380,547 391,570 477,541 448,517 138,612 359,700 400,733 344,721 637,799 699,751 112,850 250,856"),
    ...place("s", "337,163 241,391 403,457 430,522 434,490 520,520 622,349 649,322 715,307 633,467 178,19 251,478"),
];
const dots = [
    ...strays.map(([x, y]) => [x, y, 0.6]),
    ...clusters.flatMap(([sheet, cx, cy, rx, ry, count, opacity]) => Array.from({ length: count }, () => {
        const angle = random() * Math.PI * 2;
        const r = Math.sqrt(random());
        const [[x, y]] = place(sheet, `${cx + rx * r * Math.cos(angle)},${cy + ry * r * Math.sin(angle)}`);
        return [x, y, opacity];
    })),
];

const handles = [322, 784, 1246].flatMap((x) => [370, 659, 947].map((y) => [x, y])).filter(([x, y]) => x !== 784 || y !== 659);

const HawaiiMap = () => (
    <svg width="936" height="589" viewBox="321 369 936 589" role="img" aria-label="地图 1">
        <g fill="#a8dfee" stroke="#4a9fd0" strokeLinejoin="round">
            {shapes.map((shape, i) => <path key={i} d={toPath(shape)} />)}
        </g>
        <polyline points={gulches.join(" ")} fill="none" stroke="#3b93c9" />
        {dots.map(([x, y, opacity], i) => (
            <rect key={i} x={Math.round(x)} y={Math.round(y)} width="1" height="1" fill="#2f8bc6" opacity={opacity} />
        ))}
        {handles.map(([x, y]) => (
            <rect key={`${x}-${y}`} x={x + 0.5} y={y + 0.5} width="10" height="10" fill="#fff" stroke="#2b87bd" />
        ))}
        <rect x="322.500" y="370.500" width="934" height="587" fill="none" stroke="#3a8cae" />
        <rect x="322.500" y="370.500" width="934" height="587" fill="none" stroke="#6a0034" strokeDasharray="4 2" />
    </svg>
);

/* ---------- content ---------- */

const menus = [
    ["布局", "L"],
    ["编辑", "E"],
    ["视图", "V"],
    ["条目", "I"],
    ["添加条目", "A"],
    ["地图集"],
    ["设置"],
];
const addItems = [
    ["addMap", "添加地图"],
    ["add3d", "添加三维地图"],
    ["addPicture", "添加图片"],
    ["addLabel", "添加标签"],
    ["addLegend", "添加图例"],
    ["addScale", "添加比例尺"],
    ["addNorth", "添加罗盘"],
    ["addShape", "添加形状", true],
    ["addArrow", "添加箭头"],
    ["addNodes", "添加结点条目", true],
    ["addHtml", "添加超文本（HTML）"],
    ["addTable", "添加属性工作表"],
];
const sideTools = ["pan", "zoomArea", "select", "moveContent", "editNodes", ...addItems.map(([icon]) => icon)];
const extents = [
    ["横坐标最小值", "743007.552"],
    ["纵坐标最小值", "2086726.128"],
    ["横坐标最大值", "1005264.444"],
    ["纵坐标最大值", "2251830.039"],
];
const closedSections = [
    { title: "网格" },
    { title: "鹰眼图" },
    { title: "位置和大小" },
    { title: "旋转角度" },
    { title: "框架", checked: false, height: 24 },
    { title: "背景", checked: true, height: 24 },
    { title: "条目标识符", height: 24 },
    { title: "渲染", height: 24 },
    { title: "变量", height: 24 },
];

const Tool = ({ name, pressed }) => (
    <ToolButton aria-label={name} $pressed={pressed}><Draw name={name} /></ToolButton>
);
const Override = () => (
    <SmallButton $width={24} aria-label="数据定义"><OverrideIcon /></SmallButton>
);
const Section = ({ title, open, checked, height }) => (
    <SectionHead $open={open} $height={height}>
        <Toggle $open={open} aria-label={title} />
        {checked !== undefined && <Check id={title} defaultChecked={checked} />}
        <label htmlFor={checked !== undefined ? title : undefined}>{title}</label>
    </SectionHead>
);
const TitleButtons = () => (
    <>
        <button aria-label="浮动"><DockIcon /></button>
        <button aria-label="关闭"><DockIcon close /></button>
    </>
);

const App = () => {
    const [margin, setMargin] = useState("auto");

    return (
        <Window>
            <GlobalStyle />
            <MenuBar>
                {menus.map(([label, key]) => (
                    <MenuItem key={label}>
                        <MenuButton $open={key === "A"}>{label}{key && <>(<u>{key}</u>)</>}</MenuButton>
                        {key === "A" && (
                            <Dropdown>
                                {addItems.map(([icon, text, sub]) => (
                                    <li key={icon}>
                                        <DropdownItem $active={icon === "addLabel"}>
                                            <Draw name={icon} size={16} />
                                            {text}
                                            {sub && <SubArrow />}
                                        </DropdownItem>
                                    </li>
                                ))}
                            </Dropdown>
                        )}
                    </MenuItem>
                ))}
            </MenuBar>
            <ToolBar $height={39}>
                <Grip />
                <Tool name="save" />
                <Separator />
                {["newLayout", "duplicate", "manager", "folder", "saveAs"].map((name) => <Tool key={name} name={name} />)}
                <Spacer $width={212} />
                <Tool name="redo" />
                <Grip $left={8} />
                <Tool name="atlas" pressed />
                <Tool name="first" />
                <Tool name="prev" />
                <PageSelect>
                    <PageInput defaultValue="2" aria-label="页" />
                    <ComboButton aria-label="选择页"><DownArrow /></ComboButton>
                </PageSelect>
                {["next", "last", "print", "exportAtlas", "atlasSettings"].map((name) => <Tool key={name} name={name} />)}
            </ToolBar>
            <ToolBar $height={38}>
                <Grip />
                {["zoomIn", "zoomOut", "zoomActual", "zoomFull", "refresh"].map((name) => <Tool key={name} name={name} />)}
                <Grip $left={8} />
                <Tool name="lockItems" />
                <Spacer $width={197} />
                <Tool name="resize" />
            </ToolBar>
            <Main>
                <SideTools>
                    <SideGrip />
                    {sideTools.map((name) => (
                        <SideButton key={name} aria-label={name} $pressed={name === "select"}><Draw name={name} /></SideButton>
                    ))}
                </SideTools>
                <Workspace>
                    <span />
                    <HorizontalRuler />
                    <VerticalRuler />
                    <Canvas>
                        <Paper><HawaiiMap /></Paper>
                    </Canvas>
                </Workspace>
                <Splitter />
                <Docks>
                    <Dock $height={334}>
                        <Tabs>
                            <Tab $active>条目</Tab>
                            <Tab>撤销历史</Tab>
                        </Tabs>
                        <DockTitle><span>条目</span><TitleButtons /></DockTitle>
                        <ItemsFrame>
                            <ItemsTable>
                                <thead>
                                    <tr>
                                        <th aria-label="可见"><Draw name="eyeGray" size={16} /></th>
                                        <th aria-label="锁定"><Draw name="padlock" size={16} /></th>
                                        <th>条目</th>
                                    </tr>
                                </thead>
                                <tbody>
                                    <tr>
                                        <td><Check defaultChecked aria-label="可见" /></td>
                                        <td><Check aria-label="锁定" /></td>
                                        <td><ItemName><Draw name="mapItem" size={15} />地图 1</ItemName></td>
                                    </tr>
                                </tbody>
                            </ItemsTable>
                        </ItemsFrame>
                    </Dock>
                    <HSplit />
                    <Dock>
                        <Tabs>
                            <Tab>布局</Tab>
                            <Tab $active>条目属性</Tab>
                            <Tab>参考线</Tab>
                            <Tab>地图集</Tab>
                        </Tabs>
                        <DockTitle><span>条目属性</span><TitleButtons /></DockTitle>
                        <ItemTitle>地图 1</ItemTitle>
                        <ItemTools>
                            <SmallButton aria-label="refresh"><Draw name="refresh" size={16} /></SmallButton>
                            {[["setExtent", "viewExtent"], ["setScale", "viewScale"], ["bookmark", "moveContent"], ["labels"]].map((group) => (
                                <ToolGroup key={group[0]}>
                                    <Separator $height={11} />
                                    {group.map((name) => (
                                        <SmallButton key={name} aria-label={name}><Draw name={name} size={16} /></SmallButton>
                                    ))}
                                </ToolGroup>
                            ))}
                        </ItemTools>
                        <ScrollFrame>
                            <ScrollBody>
                                <FirstSection>
                                    <Section title="图层" open />
                                </FirstSection>
                                <Group>
                                    <Row>
                                        <Choice><Check />采用地图主题</Choice>
                                        <SelectBox>
                                            <select aria-label="地图主题"><option>（无）</option></select>
                                            <DownArrow />
                                        </SelectBox>
                                        <Override />
                                    </Row>
                                    <Row>
                                        <Choice><Check />锁定图层</Choice>
                                        <SmallButton $framed $width={24} aria-label="可见性"><Draw name="eye" size={16} /></SmallButton>
                                        <Override />
                                    </Row>
                                    <Row $height={24}>
                                        <Choice $disabled><Check disabled />锁定图层样式</Choice>
                                    </Row>
                                </Group>
                                <Section title="范围" open />
                                <Group>
                                    {extents.map(([label, value]) => (
                                        <Row key={label}>
                                            <FieldLabel htmlFor={label}>{label}</FieldLabel>
                                            <Field id={label} defaultValue={value} />
                                            <Override />
                                        </Row>
                                    ))}
                                </Group>
                                <Section title="受控于地图集" open checked />
                                <Group>
                                    <Row>
                                        <Choice>
                                            <Radio name="margin" checked={margin === "auto"} onChange={() => setMargin("auto")} />
                                            要素周围的边距
                                        </Choice>
                                        <SpinBox>
                                            <PageInput $size={10} defaultValue="10%" aria-label="边距" />
                                            <svg width="13" height="10" viewBox="0 0 13 10" aria-hidden="true">
                                                <path d="M4 0h9v10H4L0 5z" fill="#8c8c8c" />
                                                <path d="M5.500 2.500l5 5M10.500 2.500l-5 5" stroke="#fff" />
                                            </svg>
                                            <SpinSteps>
                                                <button aria-label="增加"><UpArrow /></button>
                                                <button aria-label="减少"><DownArrow /></button>
                                            </SpinSteps>
                                        </SpinBox>
                                        <Override />
                                    </Row>
                                    <Row $height={24}>
                                        <Choice>
                                            <Radio name="margin" checked={margin === "best"} onChange={() => setMargin("best")} />
                                            预定义比例尺（最佳适配）
                                        </Choice>
                                    </Row>
                                    <Row $height={24}>
                                        <Choice>
                                            <Radio name="margin" checked={margin === "fixed"} onChange={() => setMargin("fixed")} />
                                            固定比例尺
                                        </Choice>
                                    </Row>
                                </Group>
                                <Collapsed>
                                    {closedSections.map((section) => <Section key={section.title} {...section} />)}
                                </Collapsed>
                            </ScrollBody>
                            <ScrollBar>
                                <ScrollStep aria-label="向上"><UpArrow /></ScrollStep>
                                <ScrollTrack $share={126} />
                                <ScrollThumb $share={455} />
                                <ScrollTrack $share={33} />
                                <ScrollStep $end aria-label="向下"><DownArrow /></ScrollStep>
                            </ScrollBar>
                        </ScrollFrame>
                    </Dock>
                </Docks>
            </Main>
            <StatusBar>
                <StatusText>横坐标: 7 毫米</StatusText>
                <StatusText>纵坐标: 0 毫米</StatusText>
                <StatusText>页: 1</StatusText>
                <ZoomBox>
                    <PageInput $size={10} defaultValue="86.1%" aria-label="缩放" />
                    <ComboButton aria-label="选择缩放"><DownArrow /></ComboButton>
                </ZoomBox>
                <ZoomSlider defaultValue="8" aria-label="缩放级别" />
                <Watermark>https://blog.csdn.net/QGISClass</Watermark>
            </StatusBar>
        </Window>
    );
};

export default App;
